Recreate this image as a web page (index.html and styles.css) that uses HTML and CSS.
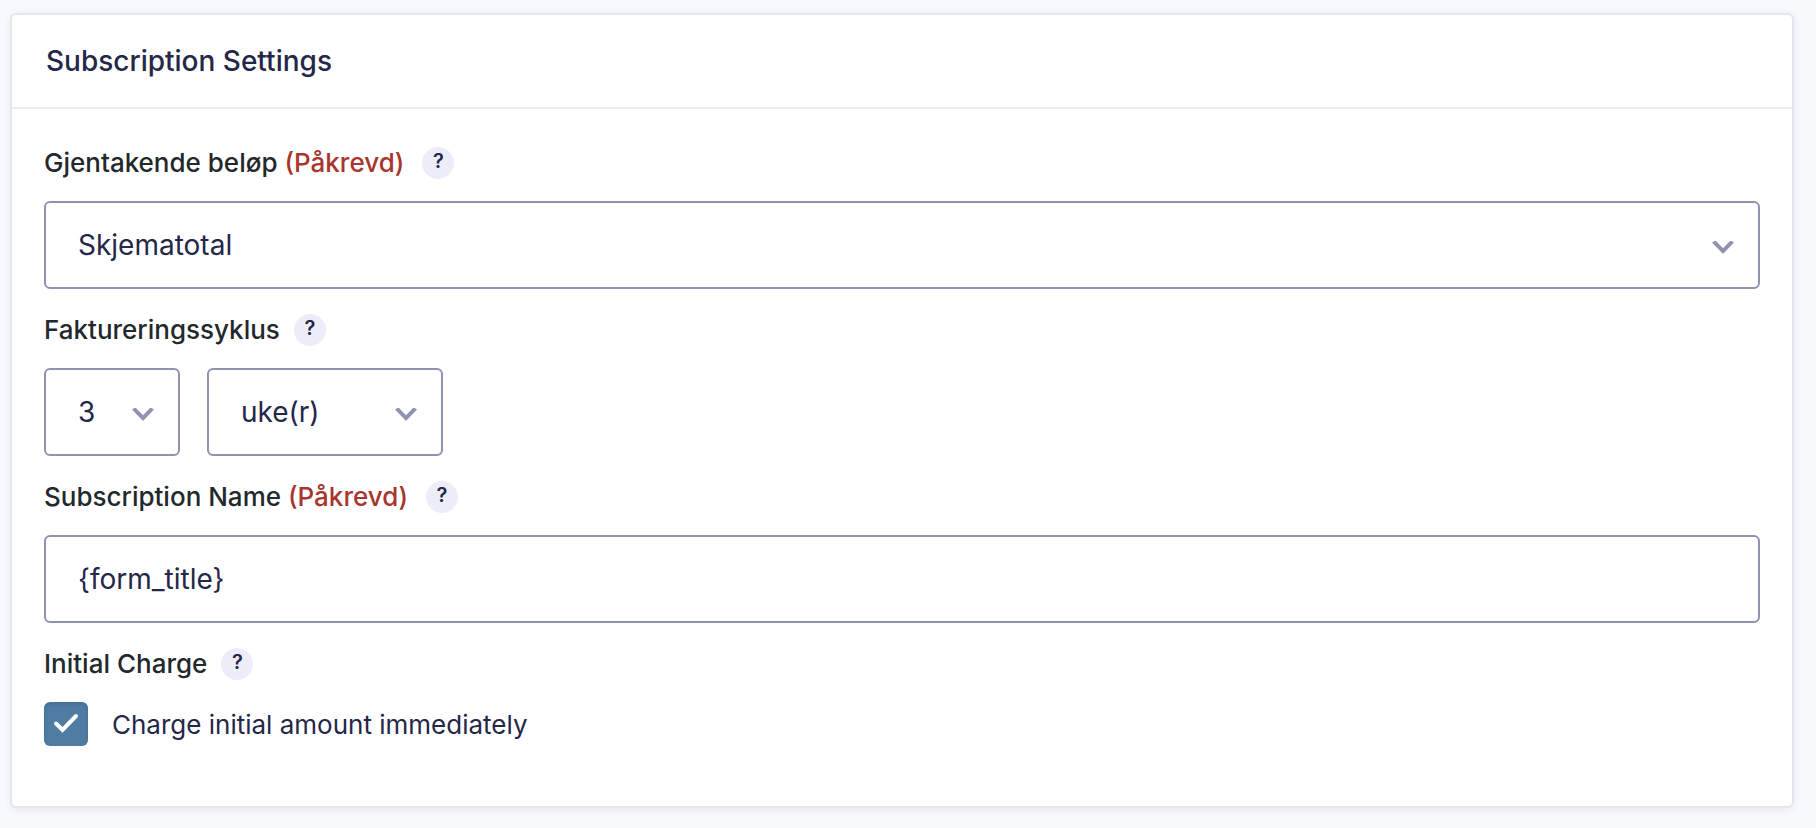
FILE: index.html
```html
<!DOCTYPE html>
<html lang="nb">
<head>
  <meta charset="UTF-8">
  <meta name="viewport" content="width=device-width, initial-scale=1.0">
  <title>Subscription Settings</title>
  <link rel="stylesheet" href="styles.css">
</head>
<body>
  <form class="panel">
    <h1 class="panel-title">Subscription Settings</h1>

    <div class="panel-body">
      <div class="field">
        <div class="field-header">
          <label for="recurringAmount">Gjentakende beløp <span class="required">(Påkrevd)</span></label>
          <button type="button" class="tooltip wide">?</button>
        </div>
        <div class="select-wrap">
          <select id="recurringAmount" class="control">
            <option>Skjematotal</option>
          </select>
          <svg class="chevron" viewBox="0 0 22 13"><path d="M0 1.500L2.500 0h1.500l7 7.200L18 0h1.500L22 1.500 11.500 12.500h-1z"/></svg>
        </div>
      </div>

      <div class="field">
        <div class="field-header">
          <label for="billingLength">Faktureringssyklus</label>
          <button type="button" class="tooltip">?</button>
        </div>
        <div class="cycle">
          <div class="select-wrap cycle-length">
            <select id="billingLength" class="control">
              <option>3</option>
            </select>
            <svg class="chevron" viewBox="0 0 22 13"><path d="M0 1.500L2.500 0h1.500l7 7.200L18 0h1.500L22 1.500 11.500 12.500h-1z"/></svg>
          </div>
          <div class="select-wrap cycle-unit">
            <select id="billingUnit" class="control" aria-label="Faktureringssyklus">
              <option>uke(r)</option>
            </select>
            <svg class="chevron" viewBox="0 0 22 13"><path d="M0 1.500L2.500 0h1.500l7 7.200L18 0h1.500L22 1.500 11.500 12.500h-1z"/></svg>
          </div>
        </div>
      </div>

      <div class="field">
        <div class="field-header">
          <label for="subscriptionName">Subscription Name <span class="required">(Påkrevd)</span></label>
          <button type="button" class="tooltip wide">?</button>
        </div>
        <input type="text" id="subscriptionName" class="control" value="{form_title}">
      </div>

      <div class="field">
        <div class="field-header">
          <span>Initial Charge</span>
          <button type="button" class="tooltip">?</button>
        </div>
        <div class="choice">
          <div class="check-wrap">
            <input type="checkbox" id="initialCharge" class="checkbox" checked>
            <svg class="check" viewBox="0 0 26 22"><path d="M3 11.500l6.500 6.500L23 4"/></svg>
          </div>
          <label for="initialCharge">Charge initial amount immediately</label>
        </div>
      </div>
    </div>
  </form>
</body>
</html>
```
FILE: styles.css
```css
* {
  box-sizing: border-box;
}
body {
  margin: 0;
  padding: 13px 22px 20px 10px;
  background-color: #f7f9fd;
  font-family: Inter, "Liberation Sans", sans-serif;
  color: #242748;
}
.panel {
  background-color: white;
  border: 2px solid #e3e5f0;
  border-radius: 6px;
  box-shadow: 0 2px 8px rgba(36, 39, 72, 0.07);
}
.panel-title {
  margin: 0;
  padding: 29px 34px;
  border-bottom: 2px solid #ebebf2;
  font-size: 28px;
  font-weight: 500;
  line-height: 34px;
}
.panel-body {
  display: flex;
  flex-direction: column;
  gap: 25px;
  padding: 38px 32px 60px;
}
.field-header {
  display: flex;
  align-items: center;
  height: 32px;
  margin-bottom: 22px;
  color: #23282d;
  font-size: 26px;
  font-weight: 500;
  line-height: 34px;
}
.required {
  color: #a8352e;
}
.tooltip {
  width: 32px;
  height: 32px;
  margin-left: 14px;
  padding: 0 0 4px;
  border: none;
  border-radius: 50%;
  background-color: #ecedf8;
  color: #242748;
  font-family: inherit;
  font-size: 20px;
  font-weight: 600;
  line-height: 28px;
  cursor: pointer;
}
.tooltip.wide {
  margin-left: 18px;
}
.control {
  display: block;
  width: 100%;
  height: 88px;
  padding: 0 32px;
  appearance: none;
  background-color: white;
  border: 2px solid #9092b2;
  border-radius: 6px;
  color: #242748;
  font-family: inherit;
  font-size: 28px;
}
.select-wrap {
  position: relative;
}
.chevron {
  position: absolute;
  right: 26px;
  top: 40px;
  width: 22px;
  height: 13px;
  fill: #9092b2;
  pointer-events: none;
}
.cycle {
  display: flex;
  gap: 27px;
}
.cycle-length {
  width: 136px;
}
.cycle-unit {
  width: 236px;
}
.choice {
  display: flex;
  align-items: center;
  gap: 24px;
  font-size: 26px;
}
.check-wrap {
  position: relative;
  width: 44px;
  height: 44px;
}
.checkbox {
  display: block;
  width: 44px;
  height: 44px;
  margin: 0;
  appearance: none;
  background-color: #4e7ca3;
  border-radius: 6px;
  box-shadow: inset 0 2px 4px rgba(0, 0, 0, 0.12);
}
.check {
  position: absolute;
  left: 9px;
  top: 10px;
  width: 26px;
  height: 22px;
  fill: none;
  stroke: white;
  stroke-width: 4;
  stroke-linecap: round;
  pointer-events: none;
}
```
